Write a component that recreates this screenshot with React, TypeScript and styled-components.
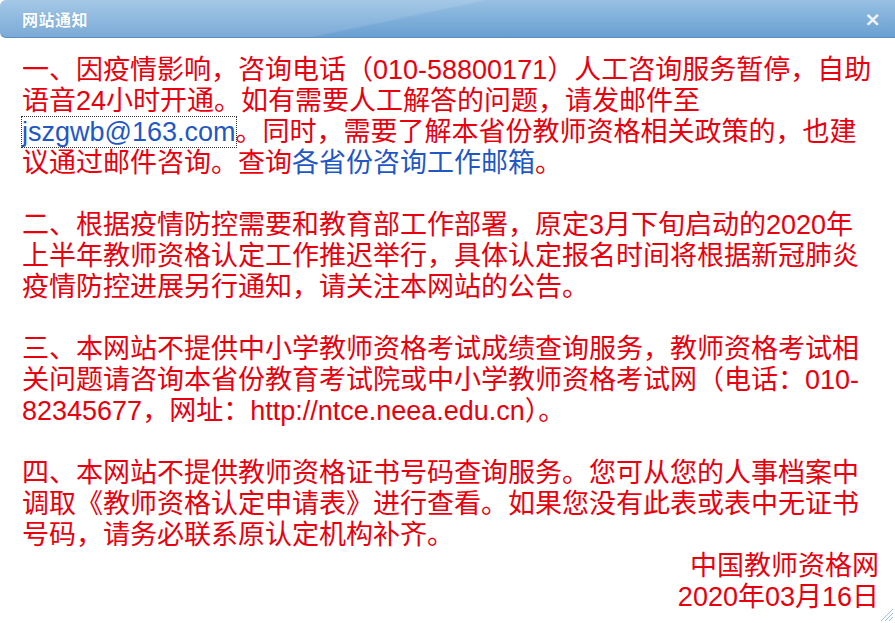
import styled, { createGlobalStyle } from "styled-components";

const GlobalStyle = createGlobalStyle`
    html, body {
        margin: 0;
        padding: 0;
        background: #ffffff;
    }
    body {
        font-family: "Liberation Sans", "Noto Sans CJK SC", sans-serif;
    }
`;

const Dialog = styled.div`
    width: 895px;
    height: 623px;
    background: #ffffff;
    display: flex;
    flex-direction: column;
    overflow: hidden;
    position: relative;
`;

const Header = styled.div`
    height: 37px;
    flex-shrink: 0;
    display: flex;
    align-items: center;
    justify-content: space-between;
    padding: 0 14px 0 22px;
    border-radius: 6px 0 0 6px;
    border-bottom: 1px solid #5b8fc2;
    background:
        linear-gradient(168deg, rgba(255, 255, 255, 0.12) 0%, rgba(255, 255, 255, 0.12) 45%, rgba(255, 255, 255, 0) 46%),
        linear-gradient(to bottom, #98c0e2 0%, #80b0da 50%, #6a9fd1 100%);
`;

const Title = styled.span`
    color: #ffffff;
    font-size: 16px;
    font-weight: bold;
    font-family: "Noto Sans CJK SC", sans-serif;
    letter-spacing: 0.5px;
    text-shadow: 0 0 1px rgba(60, 100, 150, 0.4);
`;

const CloseBtn = styled.span`
    color: #eef4fa;
    font-size: 20px;
    font-weight: bold;
    line-height: 1;
    font-family: "DejaVu Sans", sans-serif;
    cursor: pointer;
`;

const Body = styled.div`
    flex: 1;
    padding: 17px 16px 0 22px;
    color: #e8000e;
    font-size: 27px;
    line-height: 31px;
`;

const Paragraph = styled.p`
    margin: 0 0 31px 0;
    white-space: nowrap;
`;

const LastParagraph = styled(Paragraph)`
    margin-bottom: 0;
`;

const Link = styled.a<{ $focused?: boolean }>`
    color: #1f58c4;
    text-decoration: none;
    outline: ${(props) => (props.$focused ? "1px dotted #333" : "none")};
`;

const Signature = styled.div`
    text-align: right;
    padding-right: 0;
`;

const Grip = styled.svg`
    position: absolute;
    right: 2px;
    bottom: 2px;
`;

export default function App() {
    return (
        <>
            <GlobalStyle />
            <Dialog>
                <Header>
                    <Title>网站通知</Title>
                    <CloseBtn>×</CloseBtn>
                </Header>
                <Body>
                    <Paragraph>
                        一、因疫情影响，咨询电话（010-58800171）人工咨询服务暂停，自助<br />
                        语音24小时开通。如有需要人工解答的问题，请发邮件至<br />
                        <Link $focused href="#">jszgwb@163.com</Link>。同时，需要了解本省份教师资格相关政策的，也建<br />
                        议通过邮件咨询。查询<Link href="#">各省份咨询工作邮箱</Link>。
                    </Paragraph>
                    <Paragraph>
                        二、根据疫情防控需要和教育部工作部署，原定3月下旬启动的2020年<br />
                        上半年教师资格认定工作推迟举行，具体认定报名时间将根据新冠肺炎<br />
                        疫情防控进展另行通知，请关注本网站的公告。
                    </Paragraph>
                    <Paragraph>
                        三、本网站不提供中小学教师资格考试成绩查询服务，教师资格考试相<br />
                        关问题请咨询本省份教育考试院或中小学教师资格考试网（电话：010-<br />
                        82345677，网址：http://ntce.neea.edu.cn）。
                    </Paragraph>
                    <LastParagraph>
                        四、本网站不提供教师资格证书号码查询服务。您可从您的人事档案中<br />
                        调取《教师资格认定申请表》进行查看。如果您没有此表或表中无证书<br />
                        号码，请务必联系原认定机构补齐。
                    </LastParagraph>
                    <Signature>
                        中国教师资格网<br />
                        2020年03月16日
                    </Signature>
                </Body>
                <Grip width="14" height="14" viewBox="0 0 14 14">
                    <line x1="2" y1="14" x2="14" y2="2" stroke="#9cc0e0" strokeWidth="1" />
                    <line x1="6" y1="14" x2="14" y2="6" stroke="#9cc0e0" strokeWidth="1" />
                    <line x1="10" y1="14" x2="14" y2="10" stroke="#9cc0e0" strokeWidth="1" />
                </Grip>
            </Dialog>
        </>
    );
}
